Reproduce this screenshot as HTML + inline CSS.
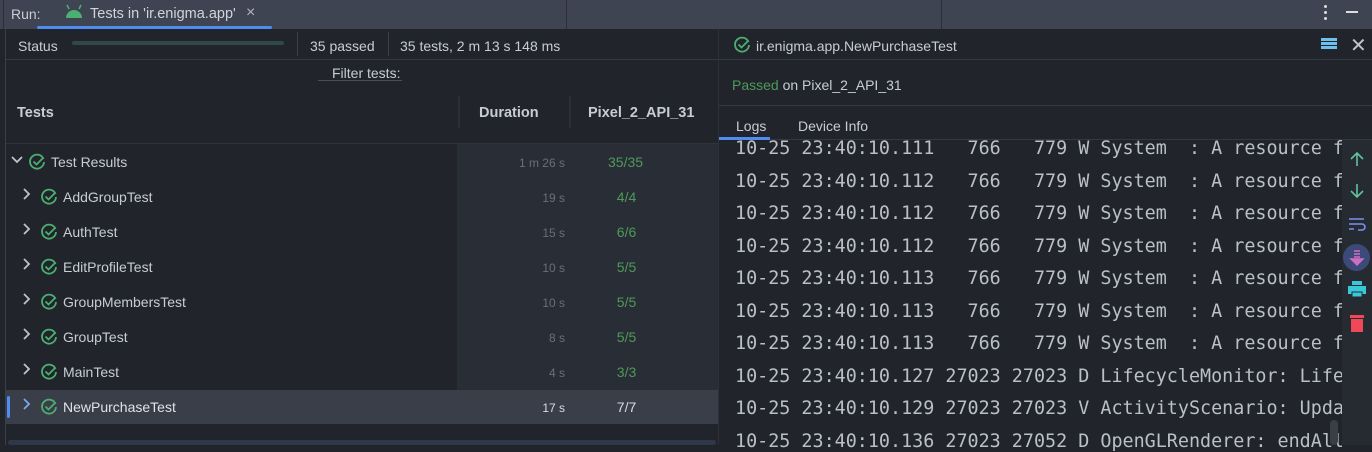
<!DOCTYPE html>
<html><head><style>
*{margin:0;padding:0;box-sizing:border-box}
body{width:1372px;height:445px;overflow:hidden;background:#21252b;font-family:"Liberation Sans",sans-serif;color:#c8ccd4;font-size:14px;position:relative}
.a{position:absolute;white-space:nowrap}
.mono{font-family:"DejaVu Sans Mono","Liberation Mono",monospace;font-size:18.4px;color:#bbbfc6}
.chk{position:absolute;width:18px;height:18px}
</style></head><body>
<div class="a" style="left:0;top:0;width:1372px;height:29px;background:#3e4451"></div>
<div class="a" style="left:3px;top:0;width:1px;height:29px;background:#2a2e35"></div>
<div class="a" style="left:11px;top:6px;font-size:14px;color:#c8ccd4">Run:</div>
<svg class="a" style="left:64px;top:4px" width="20" height="16" viewBox="0 0 20 16"><path d="M2 14a8 8 0 0 1 16 0z" fill="#4caf72"/><path d="M5 5 3 1M15 5l2-4" stroke="#4caf72" stroke-width="1.6"/></svg>
<div class="a" style="left:90px;top:6px;color:#d0d4da;font-size:14.5px">Tests in 'ir.enigma.app'</div>
<div class="a" style="left:246px;top:4px;color:#b0b4ba;font-size:16px">×</div>
<div class="a" style="left:37px;top:26px;width:235px;height:3px;background:#4e8cf0;border-radius:2px"></div>
<div class="a" style="left:566px;top:0;width:1px;height:29px;background:#2a2e35"></div>
<div class="a" style="left:941px;top:0;width:1px;height:29px;background:#2a2e35"></div>
<div class="a" style="left:1324px;top:5px;width:3px;height:3px;background:#ddd;border-radius:50%;box-shadow:0 6px 0 #ddd,0 12px 0 #ddd"></div>
<div class="a" style="left:1346px;top:11px;width:12px;height:2px;background:#ddd"></div>
<div class="a" style="left:5px;top:29px;width:1px;height:416px;background:#3a3f47"></div>
<div class="a" style="left:18px;top:38px;color:#c8ccd4">Status</div>
<div class="a" style="left:72px;top:41px;width:212px;height:4px;background:#2f4a45;border-radius:2px"></div>
<div class="a" style="left:297px;top:32px;width:1px;height:24px;background:#3a3f47"></div>
<div class="a" style="left:310px;top:38px">35 passed</div>
<div class="a" style="left:388px;top:32px;width:1px;height:24px;background:#3a3f47"></div>
<div class="a" style="left:400px;top:38px">35 tests, 2 m 13 s 148 ms</div>
<div class="a" style="left:6px;top:59px;width:712px;height:1px;background:#343840"></div>
<div class="a" style="left:332px;top:65px">Filter tests:</div>
<div class="a" style="left:318px;top:80px;width:84px;height:1px;background:#4a4f57"></div>
<div class="a" style="left:17px;top:105px;font-weight:bold;font-size:14.5px;color:#c8ccd4">Tests</div>
<div class="a" style="left:458px;top:96px;width:2px;height:32px;background:#2b2f36"></div>
<div class="a" style="left:479px;top:105px;font-weight:bold;font-size:14.5px">Duration</div>
<div class="a" style="left:569px;top:96px;width:2px;height:32px;background:#2b2f36"></div>
<div class="a" style="left:588px;top:105px;font-weight:bold;font-size:14.5px">Pixel_2_API_31</div>
<div class="a" style="left:6px;top:143px;width:712px;height:1px;background:#30343b"></div>
<div class="a" style="left:457px;top:144px;width:261px;height:246px;background:#292d35"></div>
<div class="a" style="left:6px;top:390px;width:712px;height:34px;background:#393e48"></div>
<div class="a" style="left:7px;top:396px;width:3px;height:22px;background:#4e8cf0;border-radius:2px"></div>
<div class="a" style="left:8px;top:440px;width:708px;height:5px;background:#2f3848;border-radius:3px"></div>
<div id="rows"></div>
<div class="a" style="left:718px;top:29px;width:1px;height:416px;background:#2e3238"></div>
<svg class="chk" style="left:733px;top:36px" viewBox="0 0 18 18"><path d="M15.5 6A7 7 0 1 0 16 9" fill="none" stroke="#4caf72" stroke-width="1.8"/><path d="M5.5 8.5l3 3 7-7" fill="none" stroke="#4caf72" stroke-width="1.8"/></svg>
<div class="a" style="left:756px;top:38px">ir.enigma.app.NewPurchaseTest</div>
<div class="a" style="left:1321px;top:38px;width:16px;height:3px;background:#6cc0ee;box-shadow:0 4px 0 #6cc0ee,0 8px 0 #6cc0ee"></div>
<div class="a" style="left:1350px;top:33px;font-size:20px;color:#c0c4ca">✕</div>
<div class="a" style="left:719px;top:59px;width:653px;height:1px;background:#343840"></div>
<div class="a" style="left:732px;top:77px"><span style="color:#4e9a5a">Passed</span> on Pixel_2_API_31</div>
<div class="a" style="left:719px;top:105px;width:653px;height:1px;background:#343840"></div>
<div class="a" style="left:736px;top:118px">Logs</div>
<div class="a" style="left:798px;top:118px">Device Info</div>
<div class="a" style="left:719px;top:137px;width:51px;height:3px;background:#4e8cf0"></div>
<div class="a" style="left:770px;top:139px;width:602px;height:1px;background:#343840"></div>
<div class="a" style="left:1342px;top:140px;width:30px;height:305px;background:#262a31"></div>
<div id="logs"></div>
<svg class="a" style="left:1349px;top:151px" width="16" height="16" viewBox="0 0 16 16"><path d="M8 15V2M2 8l6-6 6 6" fill="none" stroke="#5fc3a0" stroke-width="1.6"/></svg>
<svg class="a" style="left:1349px;top:183px" width="16" height="16" viewBox="0 0 16 16"><path d="M8 1v13M2 8l6 6 6-6" fill="none" stroke="#5fc3a0" stroke-width="1.6"/></svg>
<svg class="a" style="left:1348px;top:217px" width="18" height="14" viewBox="0 0 18 14"><path d="M1 2h15M1 7h13a3 3 0 0 1 0 6h-4M1 12h5" fill="none" stroke="#7b8ff0" stroke-width="1.6"/></svg>
<div class="a" style="left:1343px;top:244px;width:27px;height:27px;border-radius:50%;background:#3c4a7a"></div>
<svg class="a" style="left:1349px;top:249px" width="16" height="17" viewBox="0 0 16 17"><path d="M5 2h6M5 5h6M5 8h6M2 10h12l-6 6z" fill="#d06fc0" stroke="#d06fc0" stroke-width="1.4"/></svg>
<svg class="a" style="left:1348px;top:281px" width="18" height="17" viewBox="0 0 18 17"><rect x="4" y="0" width="10" height="4" fill="#38c8d8"/><rect x="0" y="5" width="18" height="8" fill="#38c8d8"/><rect x="4" y="11" width="10" height="5" fill="#38c8d8" stroke="#262a31"/></svg>
<svg class="a" style="left:1350px;top:314px" width="14" height="18" viewBox="0 0 14 18"><rect x="0" y="1" width="14" height="3" fill="#f04858"/><rect x="1" y="5" width="12" height="13" fill="#f04858"/></svg>
<div class="a" style="left:1330px;top:420px;width:8px;height:25px;background:#3a3f47;border-radius:4px"></div>
<script>
var rows=[["Test Results","1 m 26 s","35/35",0],["AddGroupTest","19 s","4/4",1],["AuthTest","15 s","6/6",1],["EditProfileTest","10 s","5/5",1],["GroupMembersTest","10 s","5/5",1],["GroupTest","8 s","5/5",1],["MainTest","4 s","3/3",1],["NewPurchaseTest","17 s","7/7",1]];
var h="";rows.forEach(function(r,i){var y=153+i*35,sel=i==7,x=r[3]?40:28;
h+='<div class="a" style="left:'+(x-18)+'px;top:'+(y-1)+'px;font-size:14px;color:'+(sel?'#7aa8f0':'#c0c4ca')+'">'+(r[3]?'<svg width="10" height="14" viewBox="0 0 10 14"><path d="M2 2l5 5-5 5" fill="none" stroke="currentColor" stroke-width="1.8"/></svg>':'<svg width="14" height="10" viewBox="0 0 14 10"><path d="M2 2l5 5 5-5" fill="none" stroke="currentColor" stroke-width="1.8"/></svg>')+'</div>';
h+='<svg class="chk" style="left:'+x+'px;top:'+y+'px" viewBox="0 0 18 18"><path d="M15.5 6A7 7 0 1 0 16 9" fill="none" stroke="#4caf72" stroke-width="1.8"/><path d="M5.5 8.5l3 3 7-7" fill="none" stroke="#4caf72" stroke-width="1.8"/></svg>';
h+='<div class="a" style="left:'+(x+23)+'px;top:'+(y+1)+'px;color:'+(sel?'#e0e3e8':'#c8ccd4')+'">'+r[0]+'</div>';
h+='<div class="a" style="right:'+(1372-565)+'px;top:'+(y+3)+'px;font-size:12px;color:'+(sel?'#d8dbe0':'#6a6f78')+'">'+r[1]+'</div>';
h+='<div class="a" style="left:'+(630-r[2].length*4.4)+'px;top:'+(y+1)+'px;color:'+(sel?'#d8dbe0':'#4e9a5a')+'">'+r[2]+'</div>';});
document.getElementById('rows').innerHTML=h;
var L=["10-25 23:40:10.111   766   779 W System  : A resource f","10-25 23:40:10.112   766   779 W System  : A resource f","10-25 23:40:10.112   766   779 W System  : A resource f","10-25 23:40:10.112   766   779 W System  : A resource f","10-25 23:40:10.113   766   779 W System  : A resource f","10-25 23:40:10.113   766   779 W System  : A resource f","10-25 23:40:10.113   766   779 W System  : A resource f","10-25 23:40:10.127 27023 27023 D LifecycleMonitor: Life","10-25 23:40:10.129 27023 27023 V ActivityScenario: Upda","10-25 23:40:10.136 27023 27052 D OpenGLRenderer: endAll"];
var g="";L.forEach(function(s,i){g+='<div class="a mono" style="left:735px;top:'+(138+i*32.5)+'px;width:607px;overflow:hidden">'+s.replace(/ /g,"&nbsp;")+'</div>'});
document.getElementById('logs').innerHTML=g;
</script>
</body></html>
